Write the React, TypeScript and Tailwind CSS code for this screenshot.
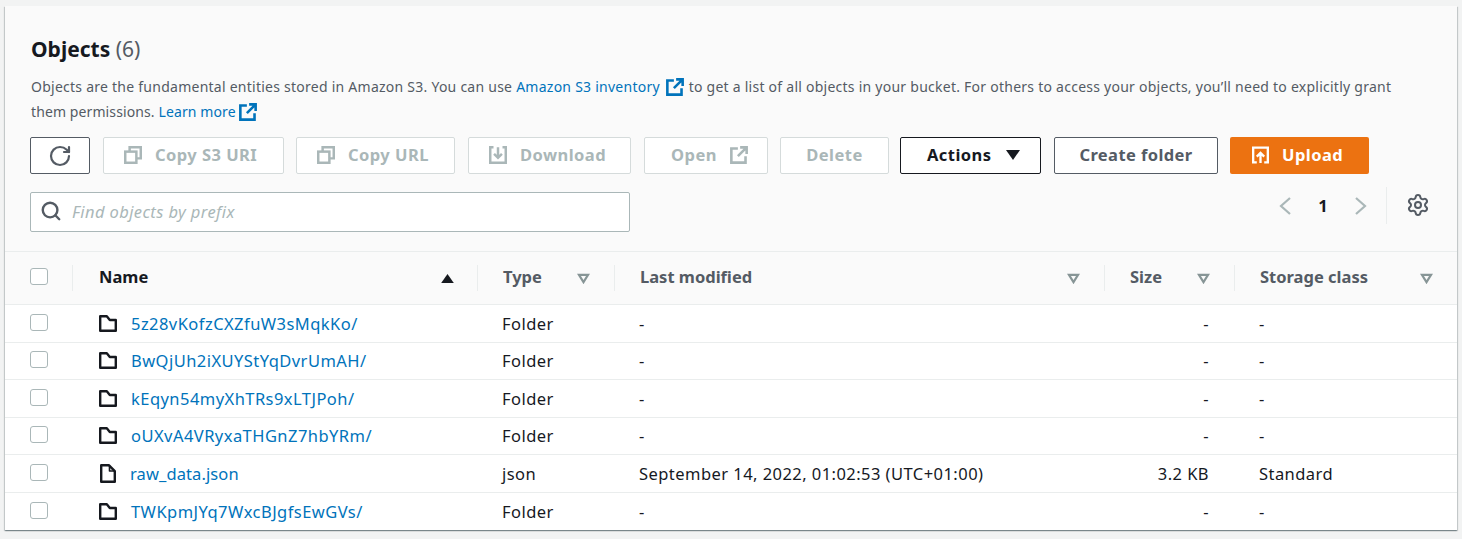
import React from 'react';
import { RotateCw, Search, Settings } from 'lucide-react';

interface Row {
  name: string;
  type: string;
  modified: string;
  size: string;
  storage: string;
  file?: boolean;
}

const rows: Row[] = [
  { name: '5z28vKofzCXZfuW3sMqkKo/', type: 'Folder', modified: '-', size: '-', storage: '-' },
  { name: 'BwQjUh2iXUYStYqDvrUmAH/', type: 'Folder', modified: '-', size: '-', storage: '-' },
  { name: 'kEqyn54myXhTRs9xLTJPoh/', type: 'Folder', modified: '-', size: '-', storage: '-' },
  { name: 'oUXvA4VRyxaTHGnZ7hbYRm/', type: 'Folder', modified: '-', size: '-', storage: '-' },
  { name: 'raw_data.json', type: 'json', modified: 'September 14, 2022, 01:02:53 (UTC+01:00)', size: '3.2 KB', storage: 'Standard', file: true },
  { name: 'TWKpmJYq7WxcBJgfsEwGVs/', type: 'Folder', modified: '-', size: '-', storage: '-' },
];

const ExternalIcon = ({ className }: { className?: string }) => (
  <svg viewBox="0 0 16 16" fill="none" stroke="currentColor" strokeWidth="2.3" className={className}>
    <path d="M7 2.2H1.2v12.6h12.6V9" />
    <path d="M9 1.2h5.8V7M14.8 1.2L7 9" />
  </svg>
);

const CopyIcon = ({ className }: { className?: string }) => (
  <svg viewBox="0 0 16 16" fill="none" stroke="currentColor" strokeWidth="2.2" className={className}>
    <path d="M5 5V1.1h9.9V11H11" />
    <rect x="1.1" y="5" width="9.9" height="9.9" />
  </svg>
);

const DownloadIcon = ({ className }: { className?: string }) => (
  <svg viewBox="0 0 16 16" fill="none" stroke="currentColor" strokeWidth="2.2" className={className}>
    <path d="M4 1.1H1.1v13.8h13.8V1.1H12" />
    <path d="M8 1v9M4.5 7L8 10.5 11.5 7" />
  </svg>
);

const UploadIcon = ({ className }: { className?: string }) => (
  <svg viewBox="0 0 16 16" fill="none" stroke="currentColor" strokeWidth="2.2" className={className}>
    <path d="M4.5 14.9H1.1V1.1h13.8v13.8h-3.4" />
    <path d="M8 15.5V6.5M4.5 9.5L8 6l3.5 3.5" />
  </svg>
);

const FolderIcon = ({ className }: { className?: string }) => (
  <svg viewBox="0 0 18 17" fill="none" stroke="currentColor" strokeWidth="2.4" strokeLinejoin="round" className={className}>
    <path d="M1.2 1.2h6.6l3 3.8h6v10.8H1.2z" />
  </svg>
);

const FileIcon = ({ className }: { className?: string }) => (
  <svg viewBox="0 0 16 19" fill="none" stroke="currentColor" strokeWidth="2.4" strokeLinejoin="round" className={className}>
    <path d="M1.2 1.2h7.6l6 6v10.6H1.2z" />
    <path d="M9.5 1.5v5.5h5.2" strokeWidth="1.6" />
  </svg>
);

const SortDown = () => (
  <svg viewBox="0 0 14 12" fill="none" stroke="#879596" strokeWidth="2.4" className="w-[13px] h-[11px]">
    <path d="M2 2h10L7 10z" />
  </svg>
);

const Chevron = ({ points }: { points: string }) => (
  <svg viewBox="0 0 14 18" fill="none" stroke="#aab7b8" strokeWidth="2.2" className="w-[14px] h-[18px]">
    <polyline points={points} />
  </svg>
);

const Checkbox = () => (
  <div className="w-[18px] h-[17px] bg-white border border-[#aab7b8] rounded-[3px]" />
);

const Divider = () => <div className="w-px h-[26px] bg-[#eaeded]" />;

const disabledBtn =
  'h-[37px] pb-[2px] flex items-center bg-white border border-[#d5dbdb] rounded-[2px] text-[#aab7b8] font-bold text-[16.5px] tracking-[0.45px]';

const HeaderCell = ({ label, className }: { label: string; className: string }) => (
  <div className={`flex items-center h-full ${className}`}>
    <Divider />
    <span className="ml-[25px] font-bold text-[16.5px] text-[#545b64] -mt-[4px]">{label}</span>
    <span className="ml-auto mr-[24px] flex"><SortDown /></span>
  </div>
);

export default function App() {
  return (
    <div className="w-[1462px] h-[539px] bg-[#f2f3f3] pt-[6px] px-[5px] overflow-hidden font-['Noto_Sans',sans-serif] text-[14px] leading-[25px] text-[#16191f]">
      <div className="w-[1452px] h-[524px] bg-white shadow-[0_1px_1px_0_rgba(0,28,36,0.3),1px_1px_1px_0_rgba(0,28,36,0.15),-1px_1px_1px_0_rgba(0,28,36,0.15)]">
        {/* Header */}
        <div className="h-[246px] bg-[#fafafa] border-b border-[#eaeded] px-[25px] pt-[27px]">
          <h1 className="ml-px text-[21px] leading-[32px] font-bold text-[#16191f]">
            Objects <span className="font-normal text-[#545b64]">(6)</span>
          </h1>
          <p className="ml-px mt-[9px] w-[1385px] text-[#545b64] leading-[25px] tracking-[0.25px]">
            Objects are the fundamental entities stored in Amazon S3. You can use{' '}
            <a className="text-[#0073bb]">
              Amazon S3 inventory <ExternalIcon className="inline-block w-[18px] h-[18px] text-[#0073bb] ml-[2px] mr-[1px] -mt-[3px]" />
            </a>{' '}
            to get a list of all objects in your bucket. For others to access your objects, you’ll need to explicitly grant{' '}
            <span className="tracking-[0.1px]">them permissions.</span>{' '}
            <a className="text-[#0073bb] tracking-[0.1px]">
              Learn more <ExternalIcon className="inline-block w-[18px] h-[18px] text-[#0073bb] -mt-[3px]" />
            </a>
          </p>

          {/* Actions */}
          <div className="mt-[13px] flex">
            <button className="w-[60px] h-[37px] flex items-center justify-center bg-white border border-[#545b64] rounded-[2px] text-[#545b64]">
              <RotateCw className="w-[24px] h-[24px]" strokeWidth={2.2} />
            </button>
            <button className={`${disabledBtn} w-[181px] ml-[13px] pl-[20px]`}>
              <CopyIcon className="w-[18px] h-[18px]" />
              <span className="ml-[13px]">Copy S3 URI</span>
            </button>
            <button className={`${disabledBtn} w-[159px] ml-[12px] pl-[20px]`}>
              <CopyIcon className="w-[18px] h-[18px]" />
              <span className="ml-[13px]">Copy URL</span>
            </button>
            <button className={`${disabledBtn} w-[163px] ml-[13px] pl-[20px]`}>
              <DownloadIcon className="w-[18px] h-[18px]" />
              <span className="ml-[13px]">Download</span>
            </button>
            <button className={`${disabledBtn} w-[124px] ml-[13px] pl-[26px]`}>
              <span>Open</span>
              <ExternalIcon className="w-[18px] h-[18px] ml-[13px]" />
            </button>
            <button className={`${disabledBtn} w-[109px] ml-[12px] justify-center`}>Delete</button>
            <button className="w-[141px] h-[37px] pb-[2px] ml-[11px] pl-[26px] flex items-center gap-[14px] bg-white border border-[#16191f] rounded-[2px] text-[#16191f] font-bold text-[16.5px] tracking-[0.45px]">
              Actions
              <svg viewBox="0 0 14 10" className="w-[14px] h-[10px]" fill="#16191f"><path d="M0 0h14L7 10z" /></svg>
            </button>
            <button className="w-[164px] h-[37px] pb-[2px] ml-[13px] flex items-center justify-center bg-white border border-[#545b64] rounded-[2px] text-[#545b64] font-bold text-[16.5px] tracking-[0.4px]">
              Create folder
            </button>
            <button className="w-[139px] h-[37px] pb-[2px] ml-[12px] pl-[22px] flex items-center gap-[13px] bg-[#ec7211] rounded-[2px] text-white font-bold text-[16.5px] tracking-[0.45px]">
              <UploadIcon className="w-[17px] h-[18px]" />
              Upload
            </button>
          </div>

          {/* Search and pagination */}
          <div className="mt-[18px] flex items-start">
            <div className="w-[600px] h-[40px] pb-[2px] flex items-center bg-white border border-[#aab7b8] rounded-[2px]">
              <Search className="w-[22px] h-[22px] ml-[9px] text-[#545b64]" strokeWidth={2.6} />
              <span className="ml-[10px] italic text-[#aab7b8] text-[16.5px] tracking-[0.4px]">Find objects by prefix</span>
            </div>
            <div className="ml-auto flex items-center h-[37px] -mt-[5px] mr-[2px]">
              <Chevron points="12,1 3,9 12,17" />
              <span className="ml-[26px] w-[10px] text-center font-bold text-[16.5px] text-[#16191f]">1</span>
              <span className="ml-[26px] flex"><Chevron points="2,1 11,9 2,17" /></span>
              <div className="ml-[18px] w-px h-[37px] bg-[#eaeded]" />
              <Settings className="ml-[19px] w-[24px] h-[24px] text-[#545b64] -mt-[2px]" strokeWidth={2} />
            </div>
          </div>
        </div>

        {/* Table header */}
        <div className="h-[53px] flex items-center bg-[#fafafa] border-b border-[#eaeded]">
          <div className="w-[68px] h-full flex items-center">
            <div className="ml-[25px] -mt-[3px]"><Checkbox /></div>
            <div className="ml-auto"><Divider /></div>
          </div>
          <div className="w-[404px] h-full flex items-center">
            <span className="ml-[26px] font-bold text-[16.5px] text-[#16191f] -mt-[4px]">Name</span>
            <svg viewBox="0 0 14 10" fill="#16191f" className="ml-auto mr-[23px] w-[13px] h-[9px]"><path d="M7 0l7 10H0z" /></svg>
          </div>
          <HeaderCell label="Type" className="w-[137px]" />
          <HeaderCell label="Last modified" className="w-[490px]" />
          <HeaderCell label="Size" className="w-[130px]" />
          <HeaderCell label="Storage class" className="w-[223px]" />
        </div>

        {/* Rows */}
        {rows.map((row) => (
          <div key={row.name} className="h-[37.5px] flex items-center border-b border-[#eaeded] last:border-b-0 text-[16.5px] tracking-[0.45px] text-[#16191f]">
            <div className="w-[68px] pl-[25px] -mt-[2px]"><Checkbox /></div>
            <div className="w-[404px] flex items-center pl-[26px]">
              {row.file ? (
                <FileIcon className="ml-px w-[16px] h-[19px] text-[#16191f]" />
              ) : (
                <FolderIcon className="w-[18px] h-[17px] text-[#16191f]" />
              )}
              <a className={row.file ? 'ml-[14px] text-[#0073bb] tracking-[0.1px]' : 'ml-[14px] text-[#0073bb]'}>{row.name}</a>
            </div>
            <div className="w-[137px] pl-[25px]">{row.type}</div>
            <div className="w-[490px] pl-[25px]">{row.modified}</div>
            <div className="w-[130px] pr-[25px] text-right">{row.size}</div>
            <div className="w-[223px] pl-[25px]">{row.storage}</div>
          </div>
        ))}
      </div>
    </div>
  );
}
